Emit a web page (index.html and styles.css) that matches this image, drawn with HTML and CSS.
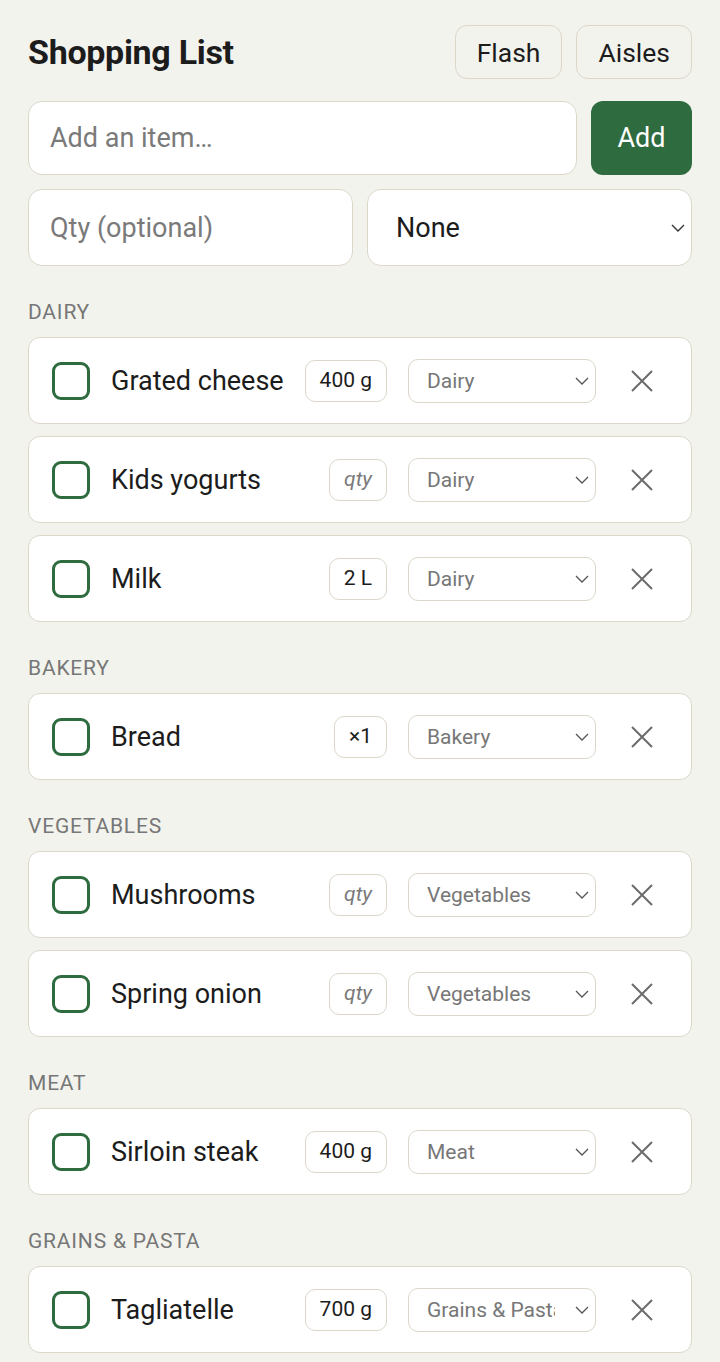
FILE: index.html
```html
<!DOCTYPE html>
<html lang="en">
<head>
  <meta charset="UTF-8">
  <meta name="viewport" content="width=device-width, initial-scale=1.0">
  <title>Shopping List</title>
  <link rel="stylesheet" href="styles.css">
</head>
<body>
  <div class="app">
    <header class="top">
      <h1>Shopping List</h1>
      <div class="top-actions">
        <button class="ghost">Flash</button>
        <button class="ghost">Aisles</button>
      </div>
    </header>

    <form class="add-row" onsubmit="return false">
      <input class="field" type="text" placeholder="Add an item…">
      <button class="add-btn">Add</button>
    </form>
    <div class="extra-row">
      <input class="field" type="text" placeholder="Qty (optional)">
      <select class="field big-select">
        <option>None</option>
        <option>Dairy</option>
        <option>Bakery</option>
        <option>Vegetables</option>
        <option>Meat</option>
        <option>Grains &amp; Pasta</option>
      </select>
    </div>

    <div id="list"></div>
  </div>

  <script>
    const aisles = ['Dairy', 'Bakery', 'Vegetables', 'Meat', 'Grains & Pasta'];

    const items = [
      { name: 'Grated cheese', qty: '400 g', aisle: 'Dairy' },
      { name: 'Kids yogurts', qty: '', aisle: 'Dairy' },
      { name: 'Milk', qty: '2 L', aisle: 'Dairy' },
      { name: 'Bread', qty: '×1', aisle: 'Bakery' },
      { name: 'Mushrooms', qty: '', aisle: 'Vegetables' },
      { name: 'Spring onion', qty: '', aisle: 'Vegetables' },
      { name: 'Sirloin steak', qty: '400 g', aisle: 'Meat' },
      { name: 'Tagliatelle', qty: '700 g', aisle: 'Grains & Pasta' }
    ];

    const closeIcon = '<svg width="24" height="24" viewBox="0 0 24 24"><path d="M2 2L22 22M22 2L2 22" stroke="#6b6b6b" stroke-width="2" fill="none"/></svg>';

    function renderList() {
      const list = document.getElementById('list');
      let html = '';
      aisles.forEach(aisle => {
        const group = items.filter(it => it.aisle === aisle);
        if (!group.length) return;
        html += `<section class="aisle"><h2>${aisle}</h2>`;
        group.forEach(it => {
          const qty = it.qty
            ? `<span class="qty">${it.qty}</span>`
            : `<span class="qty empty">qty</span>`;
          const opts = aisles.map(a => `<option${a === aisle ? ' selected' : ''}>${a}</option>`).join('');
          html += `
            <div class="item">
              <span class="check"></span>
              <span class="name">${it.name}</span>
              ${qty}
              <select class="aisle-select">${opts}</select>
              <button class="remove" aria-label="Remove">${closeIcon}</button>
            </div>`;
        });
        html += '</section>';
      });
      list.innerHTML = html;
    }

    renderList();
  </script>
</body>
</html>
```

FILE: styles.css
```css
body {
  margin: 0;
  background: #f3f3ee;
  font-family: Roboto, "Liberation Sans", Arial, sans-serif;
  color: #1c1c1c;
}

.app {
  padding: 25px 28px 40px;
}

.top {
  display: flex;
  align-items: center;
  justify-content: space-between;
}

.top h1 {
  margin: 0;
  font-size: 34px;
  font-weight: 700;
  letter-spacing: -0.3px;
}

.top-actions {
  display: flex;
  gap: 14px;
}

button {
  font-family: inherit;
  cursor: pointer;
}

.ghost {
  height: 54px;
  padding: 0 21px;
  font-size: 26.5px;
  color: #1c1c1c;
  background: #f3f3ee;
  border: 1.5px solid #ddd7ca;
  border-radius: 12px;
}

.field {
  box-sizing: border-box;
  width: 100%;
  min-width: 0;
  font-family: inherit;
  font-size: 27px;
  color: #1c1c1c;
  background: #fff;
  border: 1.5px solid #ddd7ca;
  border-radius: 14px;
  padding: 0 21px;
  outline: none;
}

.field::placeholder {
  color: #7a7a7a;
}

.add-row {
  display: flex;
  gap: 14px;
  margin: 22px 0 0;
}

.add-row .field {
  flex: 1;
  height: 74px;
}

.add-btn {
  flex-shrink: 0;
  width: 101px;
  height: 74px;
  font-size: 27px;
  color: #fff;
  background: #2e6b3e;
  border: none;
  border-radius: 12px;
}

.extra-row {
  display: grid;
  grid-template-columns: minmax(0, 1fr) minmax(0, 1fr);
  gap: 14px;
  margin-top: 14px;
}

.extra-row .field {
  height: 77px;
}

.big-select {
  appearance: none;
  padding-left: 28px;
  background: #fff url("data:image/svg+xml;utf8,<svg xmlns='http://www.w3.org/2000/svg' width='14' height='8' viewBox='0 0 14 8'><path d='M1 1l6 6 6-6' stroke='%23333' stroke-width='1.4' fill='none'/></svg>") no-repeat right 6px center;
}

.aisle {
  margin-top: 35px;
}

.aisle h2 {
  margin: 0 0 14px;
  font-size: 21px;
  line-height: 22px;
  font-weight: 400;
  letter-spacing: 0.8px;
  text-transform: uppercase;
  color: #777;
}

.item {
  display: flex;
  align-items: center;
  box-sizing: border-box;
  height: 87px;
  padding: 0 27px 0 23px;
  margin-bottom: 12px;
  background: #fff;
  border: 1.5px solid #ddd7ca;
  border-radius: 12px;
}

.check {
  box-sizing: border-box;
  width: 38px;
  height: 38px;
  border: 3px solid #2e6b3e;
  border-radius: 9px;
  flex-shrink: 0;
}

.name {
  flex: 1;
  margin-left: 21px;
  font-size: 27px;
  white-space: nowrap;
}

.qty {
  box-sizing: border-box;
  height: 42px;
  line-height: 39px;
  padding: 0 14px;
  font-size: 21px;
  border: 1.5px solid #ddd7ca;
  border-radius: 10px;
}

.qty.empty {
  font-style: italic;
  color: #7a7a7a;
}

.aisle-select {
  appearance: none;
  box-sizing: border-box;
  width: 188px;
  height: 44px;
  margin-left: 21px;
  padding: 0 40px 0 18px;
  font-family: inherit;
  font-size: 21px;
  color: #777;
  border: 1.5px solid #ddd7ca;
  border-radius: 10px;
  outline: none;
  background: #fff url("data:image/svg+xml;utf8,<svg xmlns='http://www.w3.org/2000/svg' width='14' height='8' viewBox='0 0 14 8'><path d='M1 1l6 6 6-6' stroke='%23555' stroke-width='1.3' fill='none'/></svg>") no-repeat right 6px center;
}

.remove {
  width: 44px;
  height: 44px;
  margin-left: 24px;
  padding: 0;
  display: flex;
  align-items: center;
  justify-content: center;
  background: none;
  border: none;
}
```
